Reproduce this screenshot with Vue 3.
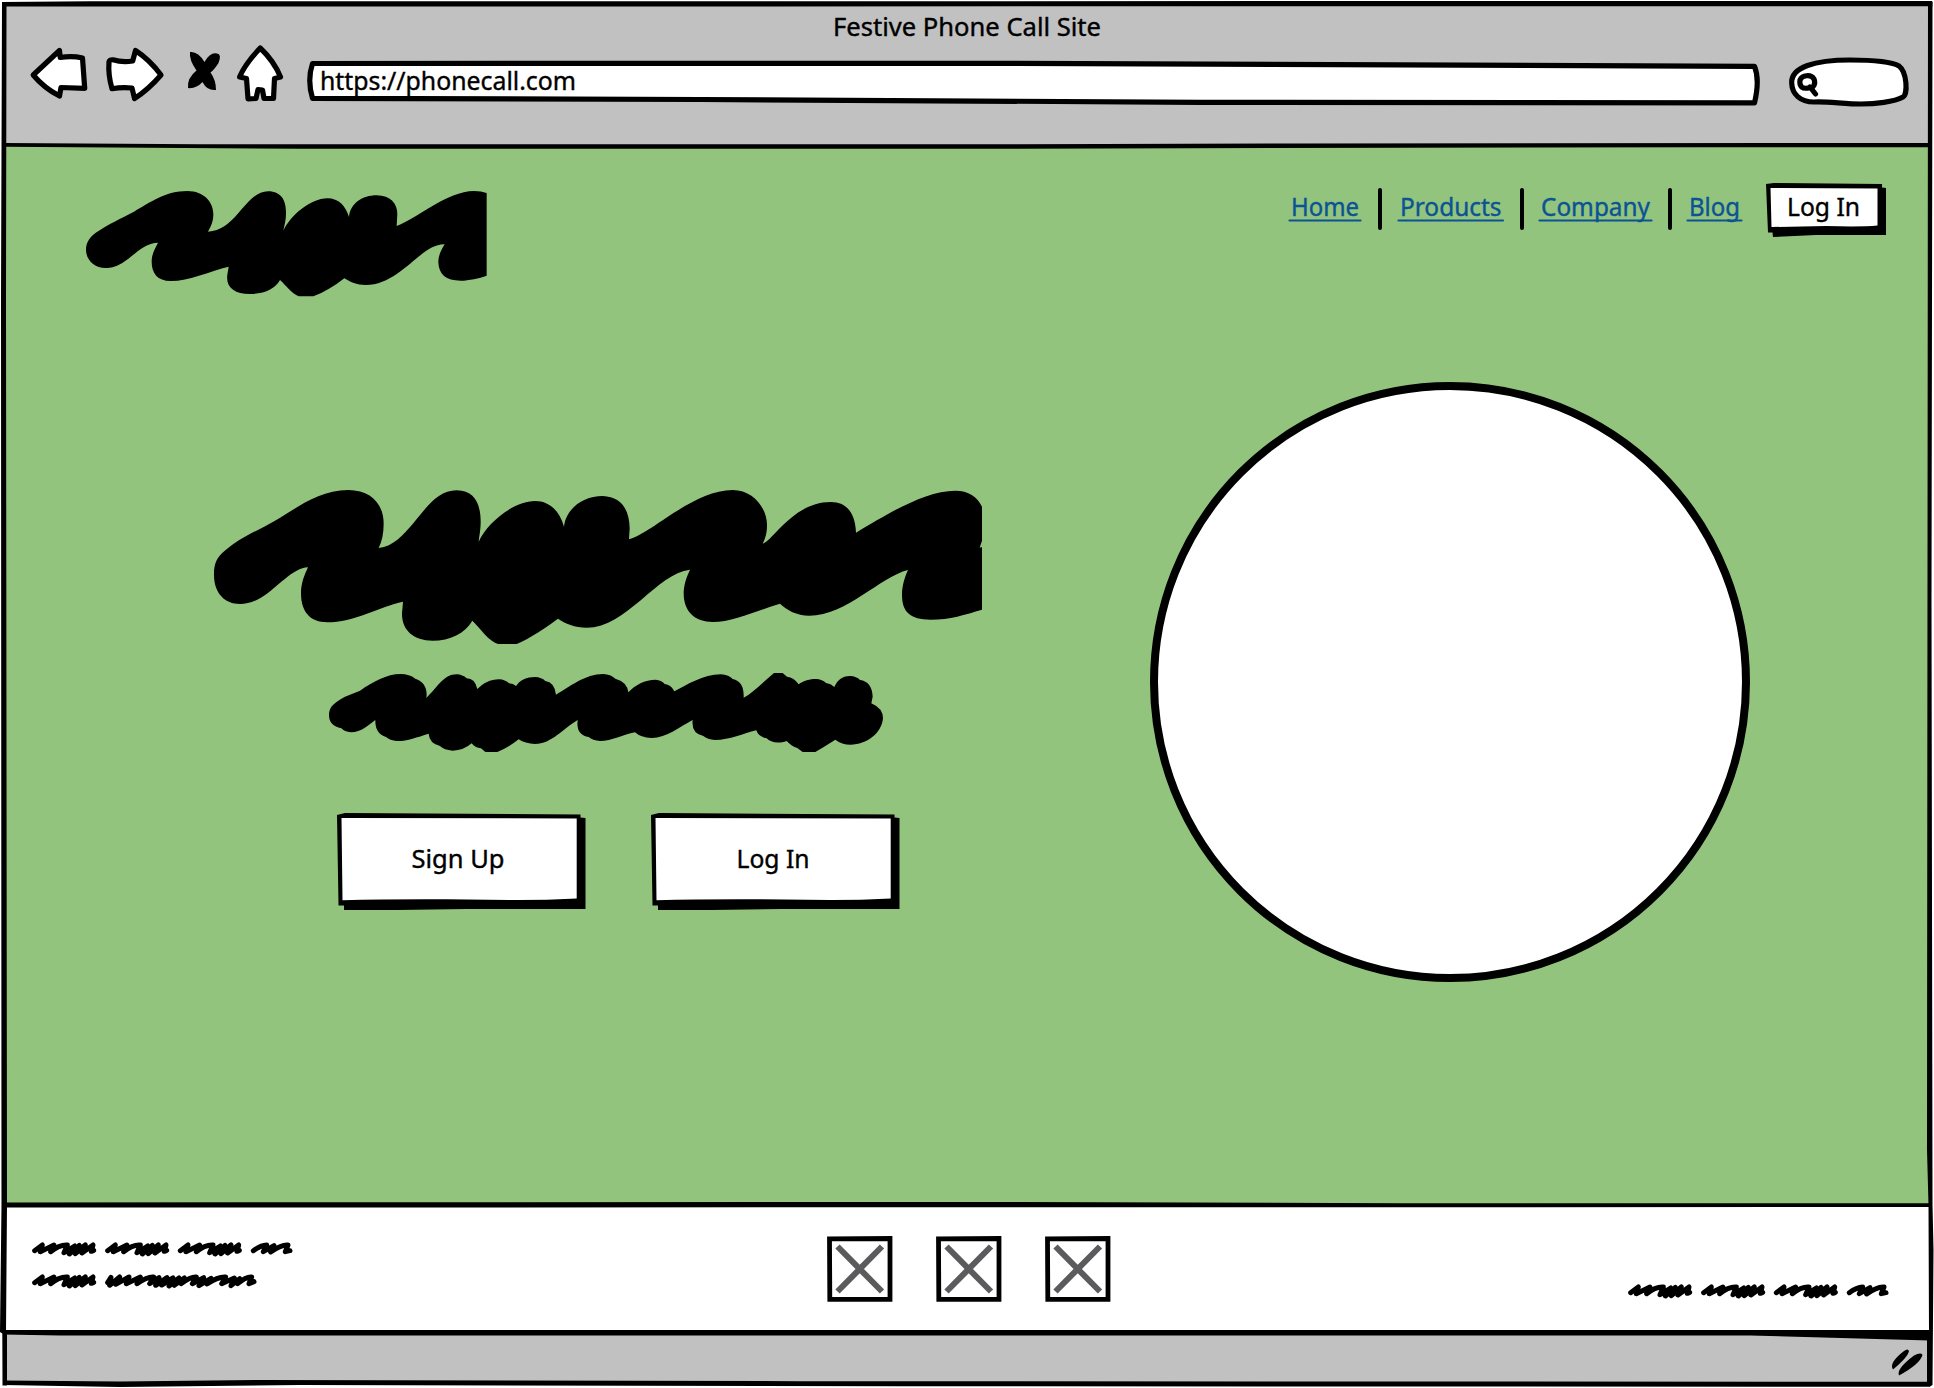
<script setup>
const links = [
  { label: 'Home', width: 72, gap: 36.5 },
  { label: 'Products', width: 105.5, gap: 36.3 },
  { label: 'Company', width: 113, gap: 34.7 },
  { label: 'Blog', width: 55, gap: 0 }
]
const longWord = 'M8 26L31 9L25 29L66 9L56 29Q84 7 106 9L96 32L128 12L112 36L142 10L130 35L160 9L150 33L183 9L178 28L185 25'
const shortWord = 'M8 26Q30 10 48 9L38 29L70 11L60 30Q92 7 112 9L104 29L118 26'
const wideWord = 'M8 26L18 10L14 34L44 9L32 31L72 9L64 29L106 9L96 29Q128 7 146 9L134 29L162 11L152 34L186 11L170 33L204 12L192 36L222 12L208 34L238 12L228 29Q258 7 274 9L262 29L296 11L282 35L318 13L306 30Q340 7 362 9L350 29L388 12L378 35L404 14L398 29Q424 7 440 9L432 29L447 23'
const fullLine = [
  { d: longWord, x: 0 },
  { d: longWord, x: 219 },
  { d: longWord, x: 437 },
  { d: shortWord, x: 656 }
]
const shortLine = [
  { d: longWord, x: 0 },
  { d: wideWord, x: 219 }
]
</script>

<template>
  <div class="window">
    <header class="chrome">
      <div class="title">
        <svg width="270" height="36"><text x="1" y="29.700" textLength="268" lengthAdjust="spacingAndGlyphs">Festive Phone Call Site</text></svg>
      </div>
      <div class="toolbar">
        <svg class="nav-icons" width="300" height="64" viewBox="0 40 300 64">
          <g class="ink">
            <path d="M33.2 75L59.5 50.5L60.2 57.5Q72 55.500 82.500 58L84.700 88.300L61 87.500L59.500 96Q44 88 33.200 75Z" />
            <path d="M109 62Q109 59.500 113 59.800Q122 62.500 132.700 61L135.500 50.500Q150 60 161 75Q148 90 134.500 98.500L132 88Q122 87 112 88.700Q108 75 109 62Z" />
            <path d="M260.200 48Q274 61 280.500 77L274.500 78.500L273.500 98.500H264L262.500 90L258 89.500L256 98.500L248 98.800L246.500 78.500L239.600 77Q245 64 260.200 48Z" />
          </g>
          <path d="M190 52Q198 51 204.500 62Q210 52 217 53.500Q222 54 218.500 63Q214 70 210.500 72.500Q216 80 216 90Q207 91 202.500 82Q196 89 188 88Q187 78 196.500 70.500Q189 60 190 52Z" />
        </svg>
        <svg class="address" width="1460" height="50" viewBox="304 58 1460 50">
          <path class="ink" d="M312.500 63.500L1000 63.300L1754.500 66.300Q1760 80 1754.500 102.800L1200 102.300L700 99.500L312.500 98.300Q307 80 312.500 63.500Z" />
          <text x="320" y="89.500" textLength="256" lengthAdjust="spacingAndGlyphs">https://phonecall.com</text>
        </svg>
        <svg class="search" width="124" height="54" viewBox="1786 56 124 54">
          <path class="ink" d="M1791.700 83C1791 67 1815 60 1850 60C1875 60 1892 62 1899 66C1907 72 1908 94 1903 97C1894 102 1875 104 1861 104C1845 104 1825 101 1814 102C1800 102 1792 94 1791.700 83Z" />
          <path class="ink" d="M1810 87.500C1802 90 1799 86 1800 80C1802 75 1811 74 1814 79C1816 84 1813 89 1810 87L1815.500 94" />
        </svg>
      </div>
    </header>

    <main class="page">
      <div class="topbar">
        <svg class="logo" width="401" height="106" viewBox="76 62 1203 318">
          <path d="M76 238C76 215 88 198 110 184C145 160 180 145 220 124C270 95 315 62 380 62C430 62 458 95 458 132C458 155 450 170 442 184C480 182 505 160 530 132C560 98 585 63 622 63C665 63 677 95 676 130C676 150 671 165 668 181C690 135 750 84 800 84C835 84 855 108 865 140C868 100 905 75 948 75C990 75 1010 100 1010 132L1008 167C1065 147 1160 62 1240 62Q1262 62 1278 68V316C1255 324 1225 331 1200 331C1155 331 1134 312 1133 275C1133 255 1142 238 1152 222C1080 220 1020 344 915 344C888 344 868 335 851 324C820 348 790 366 758 378H714C695 370 675 345 658 329C645 355 610 371 568 371C520 371 495 350 500 313L504 289C450 302 385 332 330 332C290 332 273 308 273 275C273 250 283 235 292 217C250 217 215 260 185 278C165 290 150 293 135 293C100 293 76 268 76 238Z" />
        </svg>
        <nav class="menu">
          <template v-for="(link, i) in links" :key="link.label">
            <a :style="{ width: link.width + 'px' }">
              <svg :width="link.width" height="44">
                <text x="2" y="28" :textLength="link.width - 4" lengthAdjust="spacingAndGlyphs">{{ link.label }}</text>
                <path :d="`M0.500 32.500H${link.width - 0.5}`" />
              </svg>
            </a>
            <span v-if="i < 3" class="divider" :style="{ width: link.gap + 'px' }"><i></i></span>
          </template>
          <svg class="login" width="121" height="54" viewBox="0 0 121 54">
            <path d="M0 1L8 0L116 1V4.500L120 5V52L50 52L7 54L6.500 49.500H2Z" />
            <path class="paper" d="M4.500 5L111.500 5.500V42.500Q95 44 60 43L5.500 44Z" />
            <text x="21" y="33" textLength="73" lengthAdjust="spacingAndGlyphs">Log In</text>
          </svg>
        </nav>
      </div>

      <div class="hero">
        <section class="pitch">
          <svg class="headline" width="768" height="154" viewBox="72 60 2304 462">
            <path d="M72 315C72 270 85 255 130 222C170 195 215 175 255 152C320 115 385 60 475 60C545 60 581 105 581 160C581 190 576 215 566 234C610 230 640 195 670 160C710 110 745 61 800 61C855 61 872 105 872 155C872 180 868 195 866 215C890 160 970 93 1035 93C1080 93 1110 125 1122 170C1128 115 1180 78 1238 78C1295 80 1318 120 1319 175L1317 208C1385 190 1510 60 1628 60C1690 60 1731 115 1731 165C1731 190 1726 205 1718 221C1750 212 1810 96 1922 96C1975 96 1996 135 1998 188C2080 140 2200 62 2296 62C2335 62 2362 80 2376 110V212L2369 233L2376 231V419C2325 434 2280 449 2222 449C2160 449 2136 425 2136 375C2136 345 2145 320 2154 300C2070 320 1970 437 1858 437C1820 437 1790 420 1770 401C1705 420 1630 456 1568 456C1515 456 1481 425 1481 370C1481 345 1490 320 1500 299C1400 310 1310 473 1190 473C1155 473 1125 460 1104 446C1070 472 1020 505 980 522H924C895 512 875 480 847 452C825 490 780 512 728 512C670 512 635 480 636 430L639 395C570 410 490 457 412 457C360 457 333 425 333 370C333 340 342 318 354 292C310 292 260 355 215 382C190 397 170 402 150 402C105 402 72 370 72 315Z" />
          </svg>
          <svg class="subline" width="554" height="79" viewBox="417 609 1662 237">
            <path d="M417 735C417 708 435 697 465 680L510 662C550 635 590 612 632 612Q658 612 676 626C700 633 714 655 709 684C740 655 760 613 800 613Q818 614 830 625Q855 625 862 657C880 640 900 628 928 628Q945 629 957 640Q970 641 978 648C990 630 1010 621 1035 621Q1055 622 1066 633Q1094 637 1098 674C1140 650 1185 612 1240 612Q1262 613 1276 626Q1312 636 1315 667C1335 645 1365 629 1397 629Q1414 630 1424 642Q1444 644 1453 664C1490 645 1540 613 1592 613Q1618 615 1628 627Q1663 634 1661 683C1690 668 1720 635 1752 609H1778L1791 620Q1812 622 1826 643C1840 632 1860 627 1878 627Q1897 628 1908 639Q1923 641 1933 651C1943 630 1955 618 1980 618Q2000 619 2010 630Q2046 635 2048 680L2044 700Q2079 715 2079 745C2075 790 2030 824 1982 824Q1955 824 1936 809L1900 832Q1885 841 1876 846H1838L1822 834Q1805 829 1790 813C1765 822 1740 817 1730 805Q1705 800 1699 781C1660 790 1620 810 1575 810Q1552 809 1540 798Q1503 790 1508 750C1470 770 1430 804 1385 804Q1352 803 1335 787C1300 794 1265 813 1230 813Q1208 812 1196 801Q1157 795 1163 750C1120 775 1085 822 1035 822Q1005 821 986 808Q955 833 922 846H886L873 835Q855 833 845 820Q820 842 788 842Q762 840 750 828Q718 820 716 791C680 802 650 814 620 813Q600 812 588 801Q555 792 556 750C535 765 515 787 483 787Q463 785 454 775Q417 768 417 735Z" />
          </svg>
          <div class="actions">
            <svg v-for="b in [{ t: 'Sign Up', x: 74.500, w: 93 }, { t: 'Log In', x: 85.500, w: 73 }]" :key="b.t" width="249" height="97" viewBox="0 0 249 97">
              <path d="M0 2L8 0L243.500 1.500V4.500L248.500 5V96H130L60 97H7V92.500H1.500Z" />
              <path class="paper" d="M4.500 5L239.700 5.500V85.500Q210 87 180 87L110 86.300Q50 86 5.500 87.300Z" />
              <text :x="b.x" y="54.500" :textLength="b.w" lengthAdjust="spacingAndGlyphs">{{ b.t }}</text>
            </svg>
          </div>
        </section>
        <div class="circle"></div>
      </div>
    </main>

    <footer class="footer">
      <div class="notes">
        <svg class="scribble" width="264" height="18" viewBox="0 0 792 54"><path v-for="(w, i) in fullLine" :key="i" :d="w.d" :transform="`translate(${w.x} 0)`" /></svg>
        <svg class="scribble" width="264" height="18" viewBox="0 0 792 54"><path v-for="(w, i) in shortLine" :key="i" :d="w.d" :transform="`translate(${w.x} 0)`" /></svg>
      </div>
      <div class="social">
        <svg v-for="n in 3" :key="n" width="66" height="66" viewBox="0 0 66 66">
          <path class="frame" d="M2.500 2.800L63 2.500V63.300H2.800Z" />
          <path class="cross" d="M10.500 10.500L55 55.500M55 10.500L10.500 55.500" />
        </svg>
      </div>
      <svg class="scribble copyright" width="264" height="18" viewBox="0 0 792 54"><path v-for="(w, i) in fullLine" :key="i" :d="w.d" :transform="`translate(${w.x} 0)`" /></svg>
    </footer>

    <div class="status">
      <svg width="32" height="28" viewBox="1892 1348 32 28">
        <path d="M1909 1351Q1908 1357 1893 1369.500Q1888.500 1363 1904 1351Q1908 1348 1909 1351ZM1922.500 1355Q1920 1364 1899 1375.500Q1896 1369 1914 1355.500Q1921 1352 1922.500 1355Z" />
      </svg>
    </div>

    <svg class="edges" width="1934" height="1388" viewBox="0 0 1934 1388">
      <path class="outside" d="M0 0H1934V1388H0ZM3 3V700L5 1333V1384H1929V1333L1930 700V3Z" />
      <path d="M2 2L90 1.300L1932.300 1V6.200L5 6.500Z" />
      <path d="M2 2H6.500L6 300L7 1205L6 1331H7L7 1385.500H2.500L2.300 1333.500L0 1332L1.500 1205L1 300Z" />
      <path d="M1928 2H1932.500L1931.500 600L1932.500 1205L1933.500 1250L1932.500 1385L1930 1386.500L1927 1385V1340L1929 1331L1928.500 1205L1927 1150Z" />
      <path d="M5 143L200 144.200L1000 144.200L1300 143.500L1929 143V147.300L1700 147.200L1000 148.700H300L5 146.700Z" />
      <path d="M5 1202.500L1000 1202L1400 1203.200H1930V1207L1000 1207.300L5 1207.500Z" />
      <path d="M3 1330H1930V1340.500L1750 1335.500H400L60 1335.500L3 1334.500Z" />
      <path d="M3 1380.500L120 1381.500L260 1380L800 1381.200L1930 1381.700V1386.700L900 1386.300L300 1385L120 1387L3 1385Z" />
    </svg>
  </div>
</template>

<style>
body { margin: 0; }
</style>

<style scoped>
.window {
  position: relative;
  width: 1934px;
  height: 1388px;
  overflow: hidden;
  display: flex;
  flex-direction: column;
  background: #fff;
}
svg { display: block; flex: none; overflow: visible; }
text {
  font-family: "Noto Sans", sans-serif;
  font-size: 25.5px;
  fill: #000;
  stroke: #000;
  stroke-width: 0.4px;
  stroke-linejoin: round;
}
.ink { fill: #fff; stroke: #000; stroke-width: 5.2px; stroke-linejoin: round; stroke-linecap: round; }
.paper { fill: #fff; }
.chrome { height: 146px; background: #c1c1c1; display: flex; flex-direction: column; }
.title { height: 40px; display: flex; justify-content: center; align-items: flex-start; padding-top: 6px; box-sizing: border-box; }
.toolbar { display: flex; align-items: flex-start; height: 70px; }
.nav-icons { width: 300px; }
.address { margin: 18px 0 0 4px; }
.search { margin: 16px 0 0 22px; }
.page { height: 1059px; background: #93c47d; display: flex; flex-direction: column; }
.topbar { display: flex; justify-content: space-between; padding: 36.500px 47.500px 0 85.600px; height: 236px; box-sizing: border-box; align-items: flex-start; }
.logo { margin-top: 8px; }
.menu { display: flex; align-items: flex-start; }
.menu a { margin-top: 5.500px; }
.menu a text { fill: #0b5394; stroke: #0b5394; }
.menu a path { stroke: #0b5394; stroke-width: 2.2px; stroke-linecap: round; }
.divider { display: flex; justify-content: center; padding: 5px 0 0 1px; box-sizing: border-box; }
.divider i { width: 4px; height: 42px; border-radius: 2px; background: #000; }
.login { margin-left: 23.500px; }
.hero { display: flex; align-items: flex-start; padding-left: 214px; }
.pitch { width: 768px; padding-top: 108px; display: flex; flex-direction: column; }
.subline { margin: 29px 0 0 115px; }
.actions { display: flex; gap: 65px; margin: 60.700px 0 0 123.300px; }
.circle { box-sizing: border-box; width: 600px; height: 600px; border: 8px solid #000; border-radius: 50%; background: #fff; margin-left: 168px; }
.footer { height: 128px; display: flex; align-items: flex-start; background: #fff; }
.notes { display: flex; flex-direction: column; gap: 14px; padding: 36.700px 0 0 32.300px; width: 826.500px; box-sizing: border-box; }
.scribble path { fill: none; stroke: #000; stroke-width: 15px; stroke-linejoin: round; stroke-linecap: round; }
.social { display: flex; gap: 43.200px; padding-top: 31px; width: 801.800px; }
.copyright { margin-top: 78.500px; }
.frame { fill: #fff; stroke: #000; stroke-width: 4.8px; }
.cross { fill: none; stroke: #5b5b5d; stroke-width: 6px; }
.status { flex: 1; background: #c1c1c1; display: flex; justify-content: flex-end; padding: 15px 10px 0 0; }
.edges { position: absolute; inset: 0; pointer-events: none; }
.outside { fill: #fff; fill-rule: evenodd; }
</style>
